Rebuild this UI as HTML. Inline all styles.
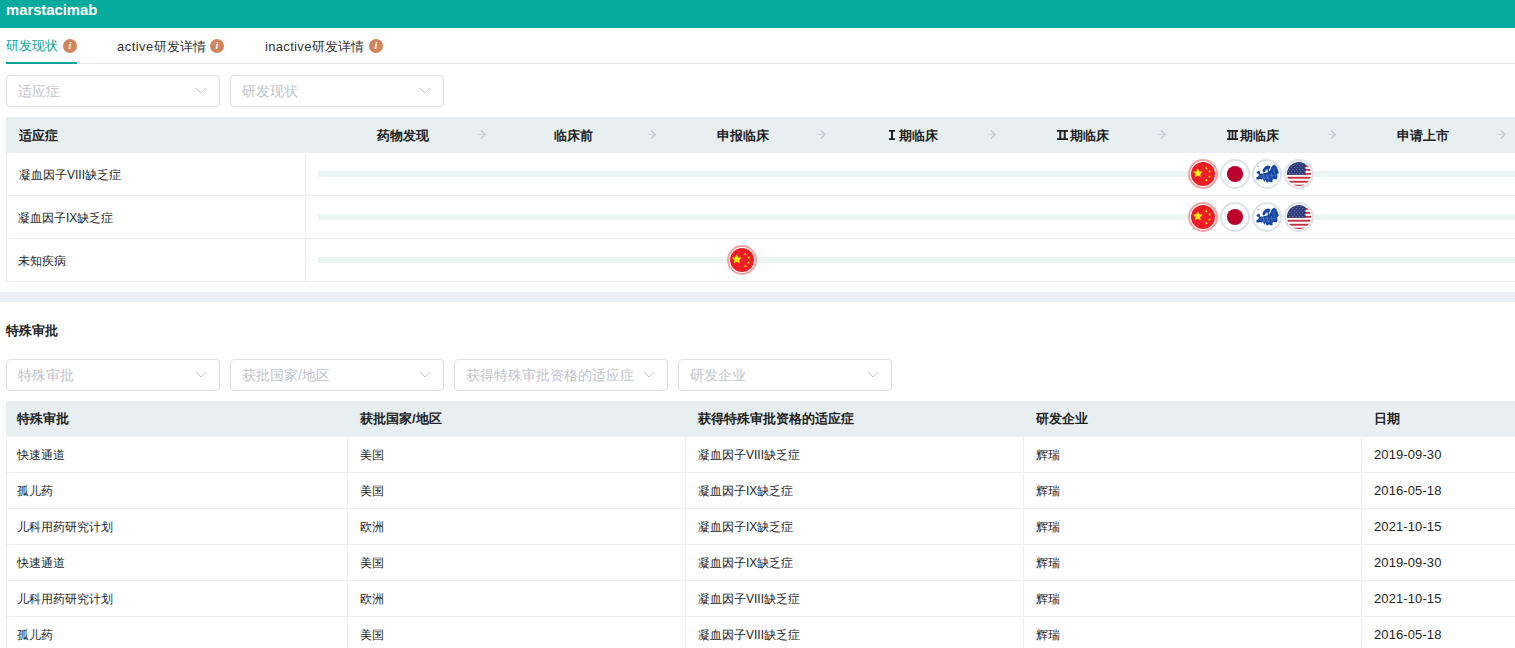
<!DOCTYPE html>
<html><head><meta charset="utf-8">
<style>
*{box-sizing:border-box;margin:0;padding:0}
html,body{width:1515px;height:648px;overflow:hidden;background:#fff;font-family:"Liberation Sans",sans-serif;color:#333}
.a{position:absolute;white-space:nowrap}
#hdr{left:0;top:0;width:1515px;height:28px;background:#07ab9e}
#hdr span{position:absolute;left:6px;top:2px;color:#fff;font-weight:bold;font-size:14.8px;line-height:17px}
.tab{font-size:13px;line-height:16px;top:38px;color:#333}
.tab.on{color:#0aa596}
.info{width:14px;height:14px;border-radius:50%;background:#d2845c;top:39px}
.info i{position:absolute;left:0;top:0;width:14px;text-align:center;color:#fff;font-size:10px;line-height:14px;font-style:italic;font-weight:bold;font-family:"Liberation Serif",serif}
#tabline{left:6px;top:63px;width:1509px;height:1px;background:#e6e8ef}
#tabul{left:6px;top:62px;width:71px;height:2px;background:#0aa596}
.sel{width:214px;height:32px;border:1px solid #dcdfe6;border-radius:4px;background:#fff}
.sel span{position:absolute;left:11px;top:7px;font-size:14px;line-height:16px;color:#c0c4cc}
.sel svg{position:absolute;left:188px;top:11px}
.thd{background:#e7eff1}
.th{font-size:13px;font-weight:bold;line-height:16px;color:#222}
.rn{font-family:"Liberation Serif",serif;font-weight:bold;font-size:14.5px}
.td{font-size:12px;line-height:16px;color:#262626}
.dt{font-size:13px;letter-spacing:0.1px}
.hl{height:1px;background:#ebeef5}
.vl{width:1px;background:#ebeef5}
.track{height:6px;background:#edf5f4}
.flag{width:30px;height:30px;border-radius:50%;border:2px solid #dde3e8;background:#fff}
.flag.cn{border-color:#f4a3a3}
.flag svg{position:absolute;left:1px;top:1px}
</style></head><body>
<div id="hdr" class="a"><span>marstacimab</span></div>

<div class="a tab on" style="left:6px">研发现状</div>
<div class="a info" style="left:63px"><i>i</i></div>
<div class="a tab" style="left:117px;top:39px"><span style="letter-spacing:0.45px">active</span>研发详情</div>
<div class="a info" style="left:210px"><i>i</i></div>
<div class="a tab" style="left:265px;top:39px"><span style="letter-spacing:0.33px">inactive</span>研发详情</div>
<div class="a info" style="left:369px"><i>i</i></div>
<div id="tabline" class="a"></div>
<div id="tabul" class="a"></div>

<!-- filters 1 -->
<div class="a sel" style="left:6px;top:75px"><span>适应症</span><svg width="12" height="8" viewBox="0 0 12 8"><path d="M1 1L6 6L11 1" fill="none" stroke="#c0c4cc" stroke-width="1"/></svg></div>
<div class="a sel" style="left:230px;top:75px"><span>研发现状</span><svg width="12" height="8" viewBox="0 0 12 8"><path d="M1 1L6 6L11 1" fill="none" stroke="#c0c4cc" stroke-width="1"/></svg></div>

<!-- table 1 -->
<div class="a thd" style="left:6px;top:117px;width:1509px;height:35px"></div>
<div class="a th" style="left:19px;top:128px">适应症</div>
<div class="a th" style="left:343px;top:128px;width:120px;text-align:center">药物发现</div>
<svg class="a" style="left:476px;top:128px" width="12" height="12" viewBox="0 0 12 12"><path d="M2 6.4H8.5" fill="none" stroke="#cdd3db" stroke-width="1"/><path d="M5 2.4L9.3 6.4L5 10.4" fill="none" stroke="#c3c9d3" stroke-width="1.3"/></svg>
<div class="a th" style="left:513px;top:128px;width:120px;text-align:center">临床前</div>
<svg class="a" style="left:646px;top:128px" width="12" height="12" viewBox="0 0 12 12"><path d="M2 6.4H8.5" fill="none" stroke="#cdd3db" stroke-width="1"/><path d="M5 2.4L9.3 6.4L5 10.4" fill="none" stroke="#c3c9d3" stroke-width="1.3"/></svg>
<div class="a th" style="left:683px;top:128px;width:120px;text-align:center">申报临床</div>
<svg class="a" style="left:816px;top:128px" width="12" height="12" viewBox="0 0 12 12"><path d="M2 6.4H8.5" fill="none" stroke="#cdd3db" stroke-width="1"/><path d="M5 2.4L9.3 6.4L5 10.4" fill="none" stroke="#c3c9d3" stroke-width="1.3"/></svg>
<div class="a th" style="left:853px;top:128px;width:120px;text-align:center"><svg width="6" height="10" viewBox="0 0 6 10" style="margin-right:4px"><rect x="0" y="0" width="6" height="1.8" fill="#222"/><rect x="0" y="8.2" width="6" height="1.8" fill="#222"/><rect x="2" y="0" width="2" height="10" fill="#222"/></svg>期临床</div>
<svg class="a" style="left:986px;top:128px" width="12" height="12" viewBox="0 0 12 12"><path d="M2 6.4H8.5" fill="none" stroke="#cdd3db" stroke-width="1"/><path d="M5 2.4L9.3 6.4L5 10.4" fill="none" stroke="#c3c9d3" stroke-width="1.3"/></svg>
<div class="a th" style="left:1023px;top:128px;width:120px;text-align:center"><svg width="11" height="10" viewBox="0 0 11 10" style="margin-right:2px"><rect x="0" y="0" width="11" height="1.8" fill="#222"/><rect x="0" y="8.2" width="11" height="1.8" fill="#222"/><rect x="2.3" y="0" width="2" height="10" fill="#222"/><rect x="6.7" y="0" width="2" height="10" fill="#222"/></svg>期临床</div>
<svg class="a" style="left:1156px;top:128px" width="12" height="12" viewBox="0 0 12 12"><path d="M2 6.4H8.5" fill="none" stroke="#cdd3db" stroke-width="1"/><path d="M5 2.4L9.3 6.4L5 10.4" fill="none" stroke="#c3c9d3" stroke-width="1.3"/></svg>
<div class="a th" style="left:1193px;top:128px;width:120px;text-align:center"><svg width="11" height="10" viewBox="0 0 11 10" style="margin-right:2px"><rect x="0" y="0" width="11" height="1.8" fill="#222"/><rect x="0" y="8.2" width="11" height="1.8" fill="#222"/><rect x="1.6" y="0" width="1.7" height="10" fill="#222"/><rect x="4.65" y="0" width="1.7" height="10" fill="#222"/><rect x="7.7" y="0" width="1.7" height="10" fill="#222"/></svg>期临床</div>
<svg class="a" style="left:1326px;top:128px" width="12" height="12" viewBox="0 0 12 12"><path d="M2 6.4H8.5" fill="none" stroke="#cdd3db" stroke-width="1"/><path d="M5 2.4L9.3 6.4L5 10.4" fill="none" stroke="#c3c9d3" stroke-width="1.3"/></svg>
<div class="a th" style="left:1363px;top:128px;width:120px;text-align:center">申请上市</div>
<svg class="a" style="left:1496px;top:128px" width="12" height="12" viewBox="0 0 12 12"><path d="M2 6.4H8.5" fill="none" stroke="#cdd3db" stroke-width="1"/><path d="M5 2.4L9.3 6.4L5 10.4" fill="none" stroke="#c3c9d3" stroke-width="1.3"/></svg>

<div class="a vl" style="left:6px;top:152px;height:130px"></div>
<div class="a vl" style="left:305px;top:117px;height:165px"></div>
<div class="a hl" style="left:6px;top:152px;width:1509px"></div>
<div class="a hl" style="left:6px;top:195px;width:1509px"></div>
<div class="a hl" style="left:6px;top:238px;width:1509px"></div>
<div class="a hl" style="left:6px;top:281px;width:1509px"></div>

<div class="a td" style="left:19px;top:167px">凝血因子VIII缺乏症</div>
<div class="a td" style="left:18px;top:210px">凝血因子IX缺乏症</div>
<div class="a td" style="left:18px;top:253px">未知疾病</div>

<div class="a track" style="left:318px;top:171px;width:1197px"></div>
<div class="a track" style="left:318px;top:214px;width:1197px"></div>
<div class="a track" style="left:318px;top:257px;width:1197px"></div>

<div class="a flag cn" style="left:1188px;top:159px"><svg width="24" height="24" viewBox="0 0 24 24"><circle cx="12" cy="12" r="12" fill="#ee1c25"/><path fill="#fff000" d="M6.80 6.30 L8.27 9.28 L11.56 9.75 L9.18 12.07 L9.74 15.35 L6.80 13.80 L3.86 15.35 L4.42 12.07 L2.04 9.75 L5.33 9.28ZM15.90 4.94 L16.00 5.89 L16.85 6.35 L15.97 6.75 L15.80 7.69 L15.15 6.98 L14.20 7.11 L14.68 6.27 L14.26 5.41 L15.20 5.60ZM19.63 8.47 L19.32 9.39 L19.89 10.16 L18.93 10.15 L18.37 10.93 L18.09 10.01 L17.17 9.73 L17.95 9.17 L17.94 8.21 L18.71 8.78ZM18.50 13.15 L18.93 14.01 L19.88 14.15 L19.19 14.82 L19.35 15.77 L18.50 15.32 L17.65 15.77 L17.81 14.82 L17.12 14.15 L18.07 14.01ZM15.90 16.84 L16.00 17.79 L16.85 18.25 L15.97 18.65 L15.80 19.59 L15.15 18.88 L14.20 19.01 L14.68 18.17 L14.26 17.31 L15.20 17.50Z"/></svg></div>
<div class="a flag jp" style="left:1220px;top:159px"><svg width="24" height="24" viewBox="0 0 24 24"><circle cx="12" cy="12" r="12" fill="#fff"/><circle cx="12" cy="12" r="8.1" fill="#bc002d"/></svg></div>
<div class="a flag eu" style="left:1252px;top:159px"><svg width="24" height="24" viewBox="0 0 24 24"><path fill="#1646a6" d="M19.2 2.6 L21.5 4.4 L22.7 7.6 L23.9 10.4 L22.2 12.3 L22.5 15.5 L21.5 17.4 L18.8 17.1 L17.4 18.1 L17.6 19.9 L15.5 20.4 L13.7 19.2 L13.0 20.6 L11.8 20.4 L10.9 18.8 L9.7 17.6 L10.4 19.7 L9.0 19.2 L7.9 16.9 L6.3 17.4 L5.3 16.9 L3.9 17.6 L1.6 17.4 L1.2 15.5 L3.0 14.6 L3.9 13.2 L3.5 12.3 L5.1 11.8 L7.0 11.4 L7.9 11.8 L9.0 10.9 L10.9 10.9 L11.8 9.5 L10.9 8.1 L10.0 10.0 L8.1 10.4 L7.4 8.6 L8.6 6.3 L10.9 3.9 L13.7 3.5 L15.5 4.4 L15.1 6.3 L13.7 7.6 L14.1 9.5 L15.5 7.6 L16.4 4.9 L17.8 3.5Z M1.4 10.4 L3.0 9.0 L4.4 8.6 L5.1 10.9 L4.6 12.3 L2.6 11.8Z"/><ellipse cx="3" cy="4.2" rx=".9" ry=".4" fill="#1646a6"/><path d="M4.4 14.1 L8.6 13.7 L12.3 14.1 L16.9 13.2 L21.5 13.7 M8.1 11.8 L9.0 15.5 L8.6 17.4 M11.8 10.9 L12.3 14.6 L13.7 17.8 M16.4 10.9 L16.9 14.6 L17.4 16.9 M6.3 15.5 L10.9 16.4 L15.5 16.0 M19.2 5.3 L18.8 9.0 L20.1 12.7" fill="none" stroke="#fff" stroke-width=".35" opacity=".55"/><ellipse cx="12" cy="9" rx=".8" ry="1.7" fill="#fff"/></svg></div>
<div class="a flag us" style="left:1284px;top:159px"><svg width="24" height="24" viewBox="0 0 24 24"><defs><clipPath id="cu174"><circle cx="12" cy="12" r="12"/></clipPath></defs><g clip-path="url(#cu174)"><rect width="24" height="24" fill="#fff"/><g fill="#c1323e"><rect x="0" y="3" width="24" height="1.9"/><rect x="0" y="6.9" width="24" height="1.9"/><rect x="0" y="10.9" width="24" height="1.9"/><rect x="0" y="14.8" width="24" height="1.9"/><rect x="0" y="18.8" width="24" height="1.9"/><rect x="0" y="22.7" width="24" height="1.9"/></g><rect x="0" y="0" width="18.5" height="12.7" fill="#2a3b78"/><g fill="#8790bd"><circle cx="1.2" cy="1.6" r=".55"/><circle cx="4.4" cy="1.6" r=".55"/><circle cx="7.6" cy="1.6" r=".55"/><circle cx="10.8" cy="1.6" r=".55"/><circle cx="14.0" cy="1.6" r=".55"/><circle cx="17.2" cy="1.6" r=".55"/><circle cx="2.8" cy="3.6" r=".55"/><circle cx="6.0" cy="3.6" r=".55"/><circle cx="9.2" cy="3.6" r=".55"/><circle cx="12.4" cy="3.6" r=".55"/><circle cx="15.6" cy="3.6" r=".55"/><circle cx="1.2" cy="5.6" r=".55"/><circle cx="4.4" cy="5.6" r=".55"/><circle cx="7.6" cy="5.6" r=".55"/><circle cx="10.8" cy="5.6" r=".55"/><circle cx="14.0" cy="5.6" r=".55"/><circle cx="17.2" cy="5.6" r=".55"/><circle cx="2.8" cy="7.6" r=".55"/><circle cx="6.0" cy="7.6" r=".55"/><circle cx="9.2" cy="7.6" r=".55"/><circle cx="12.4" cy="7.6" r=".55"/><circle cx="15.6" cy="7.6" r=".55"/><circle cx="1.2" cy="9.6" r=".55"/><circle cx="4.4" cy="9.6" r=".55"/><circle cx="7.6" cy="9.6" r=".55"/><circle cx="10.8" cy="9.6" r=".55"/><circle cx="14.0" cy="9.6" r=".55"/><circle cx="17.2" cy="9.6" r=".55"/><circle cx="2.8" cy="11.6" r=".55"/><circle cx="6.0" cy="11.6" r=".55"/><circle cx="9.2" cy="11.6" r=".55"/><circle cx="12.4" cy="11.6" r=".55"/><circle cx="15.6" cy="11.6" r=".55"/></g></g></svg></div>
<div class="a flag cn" style="left:1188px;top:202px"><svg width="24" height="24" viewBox="0 0 24 24"><circle cx="12" cy="12" r="12" fill="#ee1c25"/><path fill="#fff000" d="M6.80 6.30 L8.27 9.28 L11.56 9.75 L9.18 12.07 L9.74 15.35 L6.80 13.80 L3.86 15.35 L4.42 12.07 L2.04 9.75 L5.33 9.28ZM15.90 4.94 L16.00 5.89 L16.85 6.35 L15.97 6.75 L15.80 7.69 L15.15 6.98 L14.20 7.11 L14.68 6.27 L14.26 5.41 L15.20 5.60ZM19.63 8.47 L19.32 9.39 L19.89 10.16 L18.93 10.15 L18.37 10.93 L18.09 10.01 L17.17 9.73 L17.95 9.17 L17.94 8.21 L18.71 8.78ZM18.50 13.15 L18.93 14.01 L19.88 14.15 L19.19 14.82 L19.35 15.77 L18.50 15.32 L17.65 15.77 L17.81 14.82 L17.12 14.15 L18.07 14.01ZM15.90 16.84 L16.00 17.79 L16.85 18.25 L15.97 18.65 L15.80 19.59 L15.15 18.88 L14.20 19.01 L14.68 18.17 L14.26 17.31 L15.20 17.50Z"/></svg></div>
<div class="a flag jp" style="left:1220px;top:202px"><svg width="24" height="24" viewBox="0 0 24 24"><circle cx="12" cy="12" r="12" fill="#fff"/><circle cx="12" cy="12" r="8.1" fill="#bc002d"/></svg></div>
<div class="a flag eu" style="left:1252px;top:202px"><svg width="24" height="24" viewBox="0 0 24 24"><path fill="#1646a6" d="M19.2 2.6 L21.5 4.4 L22.7 7.6 L23.9 10.4 L22.2 12.3 L22.5 15.5 L21.5 17.4 L18.8 17.1 L17.4 18.1 L17.6 19.9 L15.5 20.4 L13.7 19.2 L13.0 20.6 L11.8 20.4 L10.9 18.8 L9.7 17.6 L10.4 19.7 L9.0 19.2 L7.9 16.9 L6.3 17.4 L5.3 16.9 L3.9 17.6 L1.6 17.4 L1.2 15.5 L3.0 14.6 L3.9 13.2 L3.5 12.3 L5.1 11.8 L7.0 11.4 L7.9 11.8 L9.0 10.9 L10.9 10.9 L11.8 9.5 L10.9 8.1 L10.0 10.0 L8.1 10.4 L7.4 8.6 L8.6 6.3 L10.9 3.9 L13.7 3.5 L15.5 4.4 L15.1 6.3 L13.7 7.6 L14.1 9.5 L15.5 7.6 L16.4 4.9 L17.8 3.5Z M1.4 10.4 L3.0 9.0 L4.4 8.6 L5.1 10.9 L4.6 12.3 L2.6 11.8Z"/><ellipse cx="3" cy="4.2" rx=".9" ry=".4" fill="#1646a6"/><path d="M4.4 14.1 L8.6 13.7 L12.3 14.1 L16.9 13.2 L21.5 13.7 M8.1 11.8 L9.0 15.5 L8.6 17.4 M11.8 10.9 L12.3 14.6 L13.7 17.8 M16.4 10.9 L16.9 14.6 L17.4 16.9 M6.3 15.5 L10.9 16.4 L15.5 16.0 M19.2 5.3 L18.8 9.0 L20.1 12.7" fill="none" stroke="#fff" stroke-width=".35" opacity=".55"/><ellipse cx="12" cy="9" rx=".8" ry="1.7" fill="#fff"/></svg></div>
<div class="a flag us" style="left:1284px;top:202px"><svg width="24" height="24" viewBox="0 0 24 24"><defs><clipPath id="cu217"><circle cx="12" cy="12" r="12"/></clipPath></defs><g clip-path="url(#cu217)"><rect width="24" height="24" fill="#fff"/><g fill="#c1323e"><rect x="0" y="3" width="24" height="1.9"/><rect x="0" y="6.9" width="24" height="1.9"/><rect x="0" y="10.9" width="24" height="1.9"/><rect x="0" y="14.8" width="24" height="1.9"/><rect x="0" y="18.8" width="24" height="1.9"/><rect x="0" y="22.7" width="24" height="1.9"/></g><rect x="0" y="0" width="18.5" height="12.7" fill="#2a3b78"/><g fill="#8790bd"><circle cx="1.2" cy="1.6" r=".55"/><circle cx="4.4" cy="1.6" r=".55"/><circle cx="7.6" cy="1.6" r=".55"/><circle cx="10.8" cy="1.6" r=".55"/><circle cx="14.0" cy="1.6" r=".55"/><circle cx="17.2" cy="1.6" r=".55"/><circle cx="2.8" cy="3.6" r=".55"/><circle cx="6.0" cy="3.6" r=".55"/><circle cx="9.2" cy="3.6" r=".55"/><circle cx="12.4" cy="3.6" r=".55"/><circle cx="15.6" cy="3.6" r=".55"/><circle cx="1.2" cy="5.6" r=".55"/><circle cx="4.4" cy="5.6" r=".55"/><circle cx="7.6" cy="5.6" r=".55"/><circle cx="10.8" cy="5.6" r=".55"/><circle cx="14.0" cy="5.6" r=".55"/><circle cx="17.2" cy="5.6" r=".55"/><circle cx="2.8" cy="7.6" r=".55"/><circle cx="6.0" cy="7.6" r=".55"/><circle cx="9.2" cy="7.6" r=".55"/><circle cx="12.4" cy="7.6" r=".55"/><circle cx="15.6" cy="7.6" r=".55"/><circle cx="1.2" cy="9.6" r=".55"/><circle cx="4.4" cy="9.6" r=".55"/><circle cx="7.6" cy="9.6" r=".55"/><circle cx="10.8" cy="9.6" r=".55"/><circle cx="14.0" cy="9.6" r=".55"/><circle cx="17.2" cy="9.6" r=".55"/><circle cx="2.8" cy="11.6" r=".55"/><circle cx="6.0" cy="11.6" r=".55"/><circle cx="9.2" cy="11.6" r=".55"/><circle cx="12.4" cy="11.6" r=".55"/><circle cx="15.6" cy="11.6" r=".55"/></g></g></svg></div>
<div class="a flag cn" style="left:727px;top:245px"><svg width="24" height="24" viewBox="0 0 24 24"><circle cx="12" cy="12" r="12" fill="#ee1c25"/><path fill="#fff000" d="M6.80 6.30 L8.27 9.28 L11.56 9.75 L9.18 12.07 L9.74 15.35 L6.80 13.80 L3.86 15.35 L4.42 12.07 L2.04 9.75 L5.33 9.28ZM15.90 4.94 L16.00 5.89 L16.85 6.35 L15.97 6.75 L15.80 7.69 L15.15 6.98 L14.20 7.11 L14.68 6.27 L14.26 5.41 L15.20 5.60ZM19.63 8.47 L19.32 9.39 L19.89 10.16 L18.93 10.15 L18.37 10.93 L18.09 10.01 L17.17 9.73 L17.95 9.17 L17.94 8.21 L18.71 8.78ZM18.50 13.15 L18.93 14.01 L19.88 14.15 L19.19 14.82 L19.35 15.77 L18.50 15.32 L17.65 15.77 L17.81 14.82 L17.12 14.15 L18.07 14.01ZM15.90 16.84 L16.00 17.79 L16.85 18.25 L15.97 18.65 L15.80 19.59 L15.15 18.88 L14.20 19.01 L14.68 18.17 L14.26 17.31 L15.20 17.50Z"/></svg></div>

<!-- band -->
<div class="a" style="left:0;top:292px;width:1515px;height:10px;background:#e9edf5"></div>

<div class="a th" style="left:6px;top:323px">特殊审批</div>

<!-- filters 2 -->
<div class="a sel" style="left:6px;top:359px"><span>特殊审批</span><svg width="12" height="8" viewBox="0 0 12 8"><path d="M1 1L6 6L11 1" fill="none" stroke="#c0c4cc" stroke-width="1"/></svg></div>
<div class="a sel" style="left:230px;top:359px"><span>获批国家/地区</span><svg width="12" height="8" viewBox="0 0 12 8"><path d="M1 1L6 6L11 1" fill="none" stroke="#c0c4cc" stroke-width="1"/></svg></div>
<div class="a sel" style="left:454px;top:359px"><span>获得特殊审批资格的适应症</span><svg width="12" height="8" viewBox="0 0 12 8"><path d="M1 1L6 6L11 1" fill="none" stroke="#c0c4cc" stroke-width="1"/></svg></div>
<div class="a sel" style="left:678px;top:359px"><span>研发企业</span><svg width="12" height="8" viewBox="0 0 12 8"><path d="M1 1L6 6L11 1" fill="none" stroke="#c0c4cc" stroke-width="1"/></svg></div>

<!-- table 2 -->
<div class="a thd" style="left:6px;top:401px;width:1509px;height:35px;border-radius:0 0 0 3px"></div>
<div class="a hl" style="left:6px;top:436px;width:1509px"></div>
<div class="a th" style="left:17px;top:411px">特殊审批</div>
<div class="a th" style="left:360px;top:411px">获批国家/地区</div>
<div class="a th" style="left:698px;top:411px">获得特殊审批资格的适应症</div>
<div class="a th" style="left:1036px;top:411px">研发企业</div>
<div class="a th" style="left:1374px;top:411px">日期</div>
<div class="a vl" style="left:6px;top:437px;height:211px"></div>
<div class="a vl" style="left:347px;top:401px;height:247px"></div>
<div class="a vl" style="left:347px;top:437px;height:211px"></div>
<div class="a vl" style="left:685px;top:401px;height:247px"></div>
<div class="a vl" style="left:685px;top:437px;height:211px"></div>
<div class="a vl" style="left:1023px;top:401px;height:247px"></div>
<div class="a vl" style="left:1023px;top:437px;height:211px"></div>
<div class="a vl" style="left:1361px;top:401px;height:247px"></div>
<div class="a vl" style="left:1361px;top:437px;height:211px"></div>
<div class="a hl" style="left:6px;top:472px;width:1509px"></div>
<div class="a td" style="left:17px;top:447px">快速通道</div>
<div class="a td" style="left:360px;top:447px">美国</div>
<div class="a td" style="left:698px;top:447px">凝血因子VIII缺乏症</div>
<div class="a td" style="left:1036px;top:447px">辉瑞</div>
<div class="a td dt" style="left:1374px;top:447px">2019-09-30</div>
<div class="a hl" style="left:6px;top:508px;width:1509px"></div>
<div class="a td" style="left:17px;top:483px">孤儿药</div>
<div class="a td" style="left:360px;top:483px">美国</div>
<div class="a td" style="left:698px;top:483px">凝血因子IX缺乏症</div>
<div class="a td" style="left:1036px;top:483px">辉瑞</div>
<div class="a td dt" style="left:1374px;top:483px">2016-05-18</div>
<div class="a hl" style="left:6px;top:544px;width:1509px"></div>
<div class="a td" style="left:17px;top:519px">儿科用药研究计划</div>
<div class="a td" style="left:360px;top:519px">欧洲</div>
<div class="a td" style="left:698px;top:519px">凝血因子IX缺乏症</div>
<div class="a td" style="left:1036px;top:519px">辉瑞</div>
<div class="a td dt" style="left:1374px;top:519px">2021-10-15</div>
<div class="a hl" style="left:6px;top:580px;width:1509px"></div>
<div class="a td" style="left:17px;top:555px">快速通道</div>
<div class="a td" style="left:360px;top:555px">美国</div>
<div class="a td" style="left:698px;top:555px">凝血因子IX缺乏症</div>
<div class="a td" style="left:1036px;top:555px">辉瑞</div>
<div class="a td dt" style="left:1374px;top:555px">2019-09-30</div>
<div class="a hl" style="left:6px;top:616px;width:1509px"></div>
<div class="a td" style="left:17px;top:591px">儿科用药研究计划</div>
<div class="a td" style="left:360px;top:591px">欧洲</div>
<div class="a td" style="left:698px;top:591px">凝血因子VIII缺乏症</div>
<div class="a td" style="left:1036px;top:591px">辉瑞</div>
<div class="a td dt" style="left:1374px;top:591px">2021-10-15</div>
<div class="a hl" style="left:6px;top:652px;width:1509px"></div>
<div class="a td" style="left:17px;top:627px">孤儿药</div>
<div class="a td" style="left:360px;top:627px">美国</div>
<div class="a td" style="left:698px;top:627px">凝血因子VIII缺乏症</div>
<div class="a td" style="left:1036px;top:627px">辉瑞</div>
<div class="a td dt" style="left:1374px;top:627px">2016-05-18</div>
</body></html>
